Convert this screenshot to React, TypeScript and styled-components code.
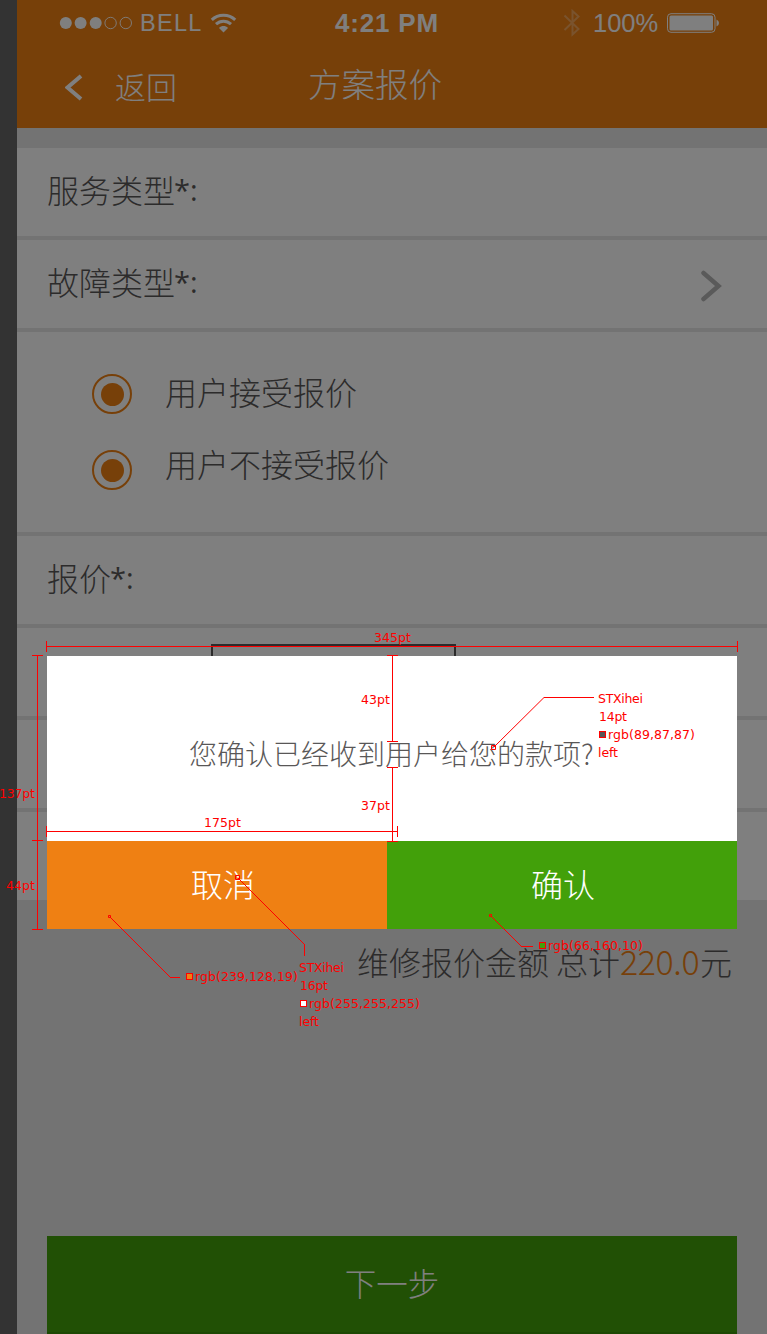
import React from 'react';
import styled, { createGlobalStyle } from 'styled-components';

const color = {
  orange: 'rgb(239,128,19)',
  green: 'rgb(66,160,10)',
  ink: 'rgb(89,87,87)',
  page: '#e6e6e6',
  mark: '#ff0000',
};

const Global = createGlobalStyle`
  * { box-sizing: border-box; }
  body {
    margin: 0;
    background: #333;
    font-family: "Noto Sans CJK SC", "Noto Sans", sans-serif;
    font-weight: 300;
    overflow: hidden;
  }
`;

const Board = styled.div`
  position: relative;
  width: 767px;
  height: 1334px;
  padding-left: 17px;
  background: #333;
  overflow: hidden;
`;

const Phone = styled.div`
  position: relative;
  display: flex;
  flex-direction: column;
  width: 750px;
  height: 1334px;
  background: ${color.page};
`;

const Header = styled.header`
  flex: none;
  height: 128px;
  background: ${color.orange};
  color: #fff;
`;

const StatusBar = styled.div`
  display: grid;
  grid-template-columns: 318px 1fr 205px;
  height: 46px;
  font-family: "Liberation Sans", sans-serif;
  line-height: 46px;
  font-weight: 400;
`;

const StatusSide = styled.div`
  display: flex;
  align-items: center;
  height: 46px;

  > * {
    flex: none;
  }
`;

const Signal = styled.svg`
  margin-left: 42px;
`;

const Carrier = styled.span`
  width: 63px;
  margin-left: 7px;
  font-size: 23.5px;
  letter-spacing: 1.3px;
  white-space: nowrap;
`;

const Wifi = styled.svg`
  margin-left: 7px;
`;

const Clock = styled.div`
  font-size: 26px;
  font-weight: 700;
  letter-spacing: 0.8px;
  white-space: nowrap;
`;

const Percent = styled.span`
  width: 66px;
  margin: 0 7px 0 13px;
  font-size: 25.5px;
  white-space: nowrap;
`;

const NavBar = styled.nav`
  display: grid;
  grid-template-columns: 291px 1fr;
  height: 82px;
`;

const Back = styled.div`
  display: flex;
  align-items: flex-start;
  padding-left: 48px;
  font-size: 31px;
  line-height: 40px;
`;

const BackIcon = styled.svg`
  margin-top: 28px;
`;

const BackLabel = styled.span`
  margin: 20px 0 0 32px;
`;

const Title = styled.h1`
  margin: 17px 0 0;
  font-size: 33.5px;
  font-weight: 300;
  line-height: 40px;
`;

const Form = styled.main`
  display: flex;
  flex-direction: column;
  gap: 4px;
  margin-top: 20px;
`;

const Row = styled.section`
  display: flex;
  height: 88px;
  padding: 21px 45px 0 30px;
  background: #fff;
  color: ${color.ink};
  font-size: 32px;
  line-height: 40px;
`;

const Required = styled.span`
  height: 40px;
  margin: 1px 0 0 -1px;
  font-family: "Open Sans", sans-serif;
  font-size: 29px;
  font-weight: 400;
  line-height: 40px;
`;

const RowArrow = styled.svg`
  margin: 9px 0 0 auto;
`;

const AmountField = styled.div`
  width: 245px;
  height: 56px;
  margin: -5px 0 0 164px;
  border: 2px solid ${color.ink};
`;

const Choices = styled.section`
  display: flex;
  flex-direction: column;
  gap: 36px;
  height: 200px;
  padding: 42px 0 0 75px;
  background: #fff;
`;

const Choice = styled.label<{ $lift: number }>`
  display: flex;
  height: 40px;
  color: ${color.ink};
  font-size: 32px;
  line-height: 40px;

  span {
    margin: -${(p) => p.$lift}px 0 0 33px;
  }
`;

const Radio = styled.i`
  display: grid;
  place-items: center;
  width: 40px;
  height: 40px;
  border: 2px solid ${color.orange};
  border-radius: 50%;

  &::after {
    content: "";
    width: 23px;
    height: 23px;
    border-radius: 50%;
    background: ${color.orange};
  }
`;

const Total = styled.p`
  display: flex;
  justify-content: flex-end;
  margin: 39px 35px 0 0;
  color: ${color.ink};
  font-size: 32px;
  line-height: 44px;
  white-space: pre;
`;

const Amount = styled.b`
  width: 80px;
  color: ${color.orange};
  font-size: 34px;
  font-weight: 300;
  letter-spacing: -0.4px;
`;

const NextButton = styled.button`
  width: 690px;
  height: 98px;
  margin: auto 30px 0;
  padding: 0 0 4px;
  border: 0;
  border-bottom: 2px solid rgb(58,146,8);
  background: ${color.green};
  color: #fff;
  font: 300 31.5px/92px "Noto Sans CJK SC", sans-serif;
`;

const Scrim = styled.div`
  position: absolute;
  inset: 0;
  background: rgba(0, 0, 0, 0.5);
`;

const Dialog = styled.div`
  position: absolute;
  top: 656px;
  left: 30px;
  width: 690px;
  height: 273px;
  background: #fff;
`;

const Message = styled.p`
  height: 185px;
  margin: 0;
  padding: 77px 0 0 142px;
  color: ${color.ink};
  font-size: 28px;
  line-height: 40px;
  white-space: nowrap;
`;

const Actions = styled.div`
  display: grid;
  grid-template-columns: 340px 350px;
`;

const Action = styled.button<{ $fill: string }>`
  height: 88px;
  padding: 0 0 3px 144px;
  border: 0;
  background: ${(p) => p.$fill};
  color: #fff;
  text-align: left;
  font: 300 32px/85px "Noto Sans CJK SC", sans-serif;
`;

const Annotations = styled.svg`
  position: absolute;
  top: 0;
  left: 0;
  font-family: "DejaVu Sans", sans-serif;
  font-weight: 400;
  font-size: 12.5px;
`;

const notes: [string, number, number, number][] = [
  ['345pt', 374, 642, 37],
  ['43pt', 361, 704, 29],
  ['37pt', 361, 810, 29],
  ['175pt', 204, 827, 37],
  ['137pt', -1, 798, 36],
  ['44pt', 6, 890, 29],
  ['STXihei', 598, 703, 45],
  ['14pt', 599, 721, 28],
  ['rgb(89,87,87)', 608, 739, 87],
  ['left', 598, 757, 20],
  ['rgb(239,128,19)', 195, 981, 103],
  ['STXihei', 299, 972, 45],
  ['16pt', 300, 990, 28],
  ['rgb(255,255,255)', 309, 1008, 111],
  ['left', 299, 1026, 20],
  ['rgb(66,160,10)', 548, 950, 95],
];

const swatches: [number, number, string][] = [
  [599.5, 731.5, color.ink],
  [186.5, 973.5, color.orange],
  [300.5, 1000.5, '#fff'],
  [539.5, 942.5, color.green],
];

const rulers = [
  'M46.5 646.5H737.5M46.5 641V652M737.5 641V652',
  'M46.5 831.5H397.5M46.5 826V837M397.5 826V837',
  'M37.5 655.5V929.5M32 655.5H43M32 840.5H43M32 929.5H43',
  'M392.5 655.5V741.5M387 655.5H398M387 741.5H398',
  'M392.5 767.5V841.5M387 767.5H398M387 841.5H398',
  'M544 697.5H594M170 977.5H180M304.5 944V956M521 946.5H533',
];

export default function App() {
  return (
    <Board>
      <Global />
      <Phone>
        <Header>
          <StatusBar>
            <StatusSide>
              <Signal width="74" height="14" viewBox="0 0 74 14" fill="#fff">
                <circle cx="6.8" cy="7" r="6" />
                <circle cx="21.6" cy="7" r="6" />
                <circle cx="36.7" cy="7" r="6" />
                <g fill="none" stroke="#fff" strokeWidth="0.9">
                  <circle cx="51.6" cy="7" r="5.7" />
                  <circle cx="66.8" cy="7" r="5.7" />
                </g>
              </Signal>
              <Carrier>BELL</Carrier>
              <Wifi width="27" height="20" viewBox="0 0 27 20" fill="none" stroke="#fff" strokeWidth="3">
                <path d="M1.8 6.8C8.2.6 18.8.6 25.2 6.8" />
                <path d="M6 11.2c4.3-4 10.700-4 15 0" />
                <path d="M9 15c2.600-2.600 6.400-2.600 9 0l-4.500 4.500z" fill="#fff" stroke="none" />
              </Wifi>
            </StatusSide>
            <Clock>4:21 PM</Clock>
            <StatusSide>
              <svg width="18" height="28" viewBox="0 0 18 28" fill="none" stroke="#fff" strokeOpacity=".3" strokeWidth="2">
                <path d="M2.500 6.500L16.500 20L10.500 25.500V2L16.500 7.500L2.500 21" />
              </svg>
              <Percent>100%</Percent>
              <svg width="54" height="20" viewBox="0 0 54 20">
                <rect x="1.500" y=".7" width="47.500" height="18.600" rx="3.500" fill="none" stroke="#fff" />
                <rect x="3.500" y="2.500" width="43.500" height="15" rx="1.500" fill="#fff" />
                <path d="M50.500 6.500q2.500 1 2.500 3.500t-2.500 3.500z" fill="#fff" />
              </svg>
            </StatusSide>
          </StatusBar>
          <NavBar>
            <Back>
              <BackIcon width="18" height="27" viewBox="0 0 18 27" fill="none" stroke="#fff" strokeWidth="4">
                <path d="M16 2L2.500 13.500L16 25" />
              </BackIcon>
              <BackLabel>返回</BackLabel>
            </Back>
            <Title>方案报价</Title>
          </NavBar>
        </Header>
        <Form>
          <Row>
            服务类型<Required>*:</Required>
          </Row>
          <Row>
            故障类型<Required>*:</Required>
            <RowArrow width="22" height="32" viewBox="0 0 22 32" fill="none" stroke="#b5b5b5" strokeWidth="4.500" strokeLinecap="round">
              <path d="M3.500 3L18.500 16L3.500 29" />
            </RowArrow>
          </Row>
          <Choices>
            <Choice $lift={3}>
              <Radio />
              <span>用户接受报价</span>
            </Choice>
            <Choice $lift={7}>
              <Radio />
              <span>用户不接受报价</span>
            </Choice>
          </Choices>
          <Row>
            报价<Required>*:</Required>
          </Row>
          <Row>
            <AmountField />
          </Row>
          <Row />
          <Row />
        </Form>
        <Total>
          维修报价金额 总计<Amount>220.0</Amount>元
        </Total>
        <NextButton>下一步</NextButton>
        <Scrim />
        <Dialog>
          <Message>您确认已经收到用户给您的款项?</Message>
          <Actions>
            <Action $fill={color.orange}>取消</Action>
            <Action $fill={color.green}>确认</Action>
          </Actions>
        </Dialog>
      </Phone>
      <Annotations width="767" height="1334">
        <g fill="none" stroke={color.mark}>
          {rulers.map((d) => (
            <path key={d} d={d} />
          ))}
          <path d="M494 747L544 697.500M110 917L170.500 977.500M238 878L304.500 944.500M491 916L521.500 946.500" />
          <path d="M491.500 745.500h4v4h-4zM235.500 875.500h4v4h-4zM108.500 915.500h2v2h-2zM489.500 914.500h2v2h-2z" />
          {swatches.map(([x, y, fill]) => (
            <rect key={x} x={x} y={y} width="6" height="6" fill={fill} />
          ))}
        </g>
        <g fill={color.mark}>
          {notes.map(([text, x, y, w]) => (
            <text key={`${x}-${y}`} x={x} y={y} textLength={w}>
              {text}
            </text>
          ))}
        </g>
      </Annotations>
    </Board>
  );
}
